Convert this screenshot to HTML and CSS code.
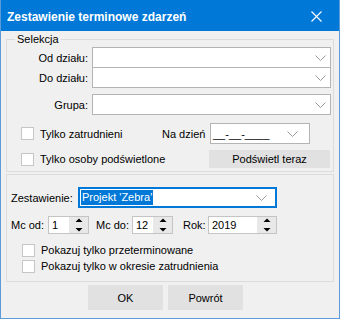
FILE: index.html
```html
<!DOCTYPE html>
<html>
<head>
  <meta charset="UTF-8">
  <title>Zestawienie terminowe zdarzeń</title>
  <link rel="stylesheet" href="styles.css">
</head>
<body>
  <div class="window">
    <div class="titlebar">
      <span class="title">Zestawienie terminowe zdarzeń</span>
      <svg class="close" width="11" height="11" viewBox="0 0 11 11">
        <path d="M0.5 0.5 L10.5 10.5 M10.5 0.5 L0.5 10.5" stroke="#fff" stroke-width="1.1" fill="none"/>
      </svg>
    </div>

    <div class="content">
      <fieldset class="group">
        <legend>Selekcja</legend>

        <div class="row row-od">
          <label class="lbl">Od działu:</label>
          <div class="combo">
            <svg class="chev" width="11" height="6" viewBox="0 0 11 6"><polyline points="0.5,0.5 5.5,5.5 10.5,0.5" fill="none" stroke="#9a9a9a"/></svg>
          </div>
        </div>
        <div class="row row-do">
          <label class="lbl">Do działu:</label>
          <div class="combo">
            <svg class="chev" width="11" height="6" viewBox="0 0 11 6"><polyline points="0.5,0.5 5.5,5.5 10.5,0.5" fill="none" stroke="#9a9a9a"/></svg>
          </div>
        </div>
        <div class="row row-grupa">
          <label class="lbl">Grupa:</label>
          <div class="combo">
            <svg class="chev" width="11" height="6" viewBox="0 0 11 6"><polyline points="0.5,0.5 5.5,5.5 10.5,0.5" fill="none" stroke="#9a9a9a"/></svg>
          </div>
        </div>

        <div class="row row-date">
          <div class="opt opt-short"><span class="check"></span>Tylko zatrudnieni</div>
          <span class="date-label">Na dzień</span>
          <div class="date-box">
            <span>__-__-____</span>
            <svg class="chev" width="11" height="6" viewBox="0 0 11 6"><polyline points="0.5,0.5 5.5,5.5 10.5,0.5" fill="none" stroke="#9a9a9a"/></svg>
          </div>
        </div>
        <div class="row row-light">
          <div class="opt opt-long"><span class="check"></span>Tylko osoby podświetlone</div>
          <button class="btn btn-light">Podświetl teraz</button>
        </div>
      </fieldset>

      <div class="group group-report">
        <div class="row row-report">
          <span class="report-label">Zestawienie:</span>
          <div class="combo combo-focus">
            <span class="selected">Projekt 'Zebra'</span>
            <svg class="chev" width="11" height="6" viewBox="0 0 11 6"><polyline points="0.5,0.5 5.5,5.5 10.5,0.5" fill="none" stroke="#9a9a9a"/></svg>
          </div>
        </div>

        <div class="row row-spin">
          <span class="spin-label lbl-od">Mc od:</span>
          <div class="spin spin-month">
            <span class="spin-val">1</span>
            <span class="spin-btns">
              <svg width="18" height="16" viewBox="0 0 18 16"><path d="M5.5 5 L9 1.5 L12.5 5 Z M5.5 11 L12.5 11 L9 14.5 Z" fill="#000"/></svg>
            </span>
          </div>
          <span class="spin-label lbl-do">Mc do:</span>
          <div class="spin spin-month">
            <span class="spin-val">12</span>
            <span class="spin-btns">
              <svg width="18" height="16" viewBox="0 0 18 16"><path d="M5.5 5 L9 1.5 L12.5 5 Z M5.5 11 L12.5 11 L9 14.5 Z" fill="#000"/></svg>
            </span>
          </div>
          <span class="spin-label lbl-rok">Rok:</span>
          <div class="spin spin-year">
            <span class="spin-val">2019</span>
            <span class="spin-btns">
              <svg width="18" height="16" viewBox="0 0 18 16"><path d="M5.5 5 L9 1.5 L12.5 5 Z M5.5 11 L12.5 11 L9 14.5 Z" fill="#000"/></svg>
            </span>
          </div>
        </div>

        <div class="check-row"><span class="check"></span>Pokazuj tylko przeterminowane</div>
        <div class="check-row"><span class="check"></span>Pokazuj tylko w okresie zatrudnienia</div>
      </div>

      <div class="actions">
        <button class="btn btn-action">OK</button>
        <button class="btn btn-action">Powrót</button>
      </div>
    </div>
  </div>
</body>
</html>
```

FILE: styles.css
```css
* { box-sizing: border-box; }
body {
  margin: 0;
  background: #fff;
  font-family: "Liberation Sans", Arial, sans-serif;
  font-size: 11px;
  color: #000;
}
.window {
  width: 340px;
  height: 319px;
  border: 1px solid #5b9bd9;
  border-top: none;
  background: #f0f0f0;
}
.titlebar {
  height: 31px;
  background: #0078d7;
  display: flex;
  align-items: center;
  padding: 0 17px 0 6px;
  color: #fff;
}
.title {
  flex: 1;
  font-size: 12px;
  font-weight: bold;
  padding-top: 2px;
}
.close { display: block; margin-top: 1px; }

.content { padding: 0 5px; }

.group {
  margin: 2px 0 0;
  padding: 0 0 3px;
  border: 1px solid #dcdcdc;
  min-width: 0;
}
.group legend {
  margin-left: 8px;
  padding: 0 2px;
  line-height: 13px;
}

.row {
  display: flex;
  align-items: center;
}
.lbl {
  width: 81px;
  margin-right: 4px;
  text-align: right;
}
.combo {
  width: 239px;
  height: 21px;
  background: #fff;
  border: 1px solid #b4b4b4;
  display: flex;
  align-items: center;
  justify-content: flex-end;
  padding-right: 4px;
}
.chev { display: block; }
.row-od { margin-top: 1px; }
.row-do { margin-top: -1px; }
.row-grupa { margin-top: 6px; }

.row-date { margin-top: 8px; height: 21px; padding-left: 14px; }
.row-light { margin-top: 6px; height: 18px; padding-left: 14px; }
.opt {
  display: flex;
  align-items: center;
}
.opt-short { width: 141px; }
.opt-long { width: 188px; }
.check {
  width: 13px;
  height: 13px;
  border: 1px solid #c6c6c6;
  background: #fff;
  margin-right: 6px;
  flex: none;
}
.date-label { width: 48px; }
.date-box {
  width: 100px;
  height: 21px;
  background: #fff;
  border: 1px solid #b4b4b4;
  display: flex;
  align-items: center;
  justify-content: space-between;
  padding: 0 11px 0 2px;
}
.btn {
  font-family: inherit;
  font-size: 11px;
  color: #000;
  background: #e1e1e1;
  border: none;
  padding: 0;
}
.btn-light {
  width: 121px;
  height: 18px;
}

.group-report {
  margin-top: 2px;
  border: 1px solid #dcdcdc;
  padding: 12px 0 7px 4px;
}
.report-label { width: 67px; }
.combo-focus {
  width: 199px;
  border: 2px solid #0078d7;
  justify-content: space-between;
  padding: 0 8px 0 1px;
}
.selected {
  background: #0078d7;
  color: #fff;
  line-height: 15px;
  padding: 0 1px;
}

.row-spin { margin-top: 8px; height: 18px; }
.spin-label { display: block; }
.lbl-od { width: 37px; }
.lbl-do { width: 43px; padding-left: 7px; }
.lbl-rok { width: 35px; padding-left: 10px; }
.spin {
  height: 18px;
  background: #fff;
  border: 1px solid #c4c4c4;
  display: flex;
  align-items: stretch;
}
.spin-month { width: 41px; }
.spin-year { width: 69px; }
.spin-val {
  flex: 1;
  padding-left: 3px;
  line-height: 16px;
}
.spin-btns {
  width: 19px;
  background: #e8e8e8;
  display: flex;
  align-items: center;
  justify-content: center;
}
.spin-btns svg { display: block; }

.check-row {
  display: flex;
  align-items: center;
  height: 16px;
  padding-left: 11px;
}
.check-row:first-of-type { margin-top: 8px; }
.row-spin + .check-row { margin-top: 8px; }

.actions {
  display: flex;
  gap: 5px;
  margin-top: 3px;
  padding-left: 82px;
}
.btn-action {
  width: 75px;
  height: 25px;
}
```
